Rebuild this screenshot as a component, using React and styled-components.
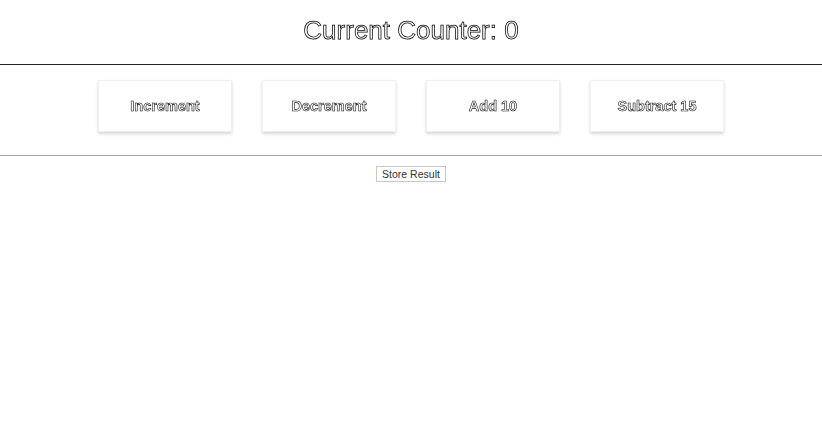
import React, { useState } from "react";
import styled, { createGlobalStyle } from "styled-components";

const GlobalStyle = createGlobalStyle`
  body {
    margin: 0;
    background: #fff;
    font-family: "Liberation Sans", Arial, sans-serif;
  }
`;

const Header = styled.div`
  padding: 15px 0 19px;
  border-bottom: 1px solid #222;
  text-align: center;
`;

const Title = styled.h1`
  margin: 0;
  font-size: 26px;
  line-height: 30px;
  font-weight: normal;
  color: #fff;
  -webkit-text-stroke: 0.75px #000;
  filter: grayscale(1);
`;

const Controls = styled.div`
  display: flex;
  justify-content: center;
  gap: 30px;
  padding: 15px 0 23px;
  border-bottom: 1px solid #aaa;
`;

const Card = styled.button`
  width: 134px;
  height: 52px;
  border: 1px solid #f0f0f0;
  background: #fff;
  box-shadow: 0 2px 3px rgba(0, 0, 0, 0.16);
  font-family: inherit;
  cursor: pointer;
`;

const Label = styled.span`
  display: inline-block;
  font-size: 14.5px;
  font-weight: bold;
  color: #fff;
  -webkit-text-stroke: 0.6px #111;
  filter: grayscale(1);
`;

const Footer = styled.div`
  display: flex;
  justify-content: center;
  padding-top: 10px;
`;

const StoreButton = styled.button`
  height: 16px;
  padding: 0 5px;
  border: 1px solid #c8c8c8;
  border-radius: 0;
  background: #fff;
  font-family: inherit;
  font-size: 10.5px;
  line-height: 14px;
  color: #333;
  cursor: pointer;
`;

function App() {
  const [counter, setCounter] = useState(0);
  const [results, setResults] = useState([]);

  return (
    <>
      <GlobalStyle />
      <Header>
        <Title>Current Counter: {counter}</Title>
      </Header>
      <Controls>
        <Card onClick={() => setCounter(counter + 1)}>
          <Label>Increment</Label>
        </Card>
        <Card onClick={() => setCounter(counter - 1)}>
          <Label>Decrement</Label>
        </Card>
        <Card onClick={() => setCounter(counter + 10)}>
          <Label>Add 10</Label>
        </Card>
        <Card onClick={() => setCounter(counter - 15)}>
          <Label>Subtract 15</Label>
        </Card>
      </Controls>
      <Footer>
        <StoreButton onClick={() => setResults([...results, counter])}>
          Store Result
        </StoreButton>
      </Footer>
    </>
  );
}

export default App;
